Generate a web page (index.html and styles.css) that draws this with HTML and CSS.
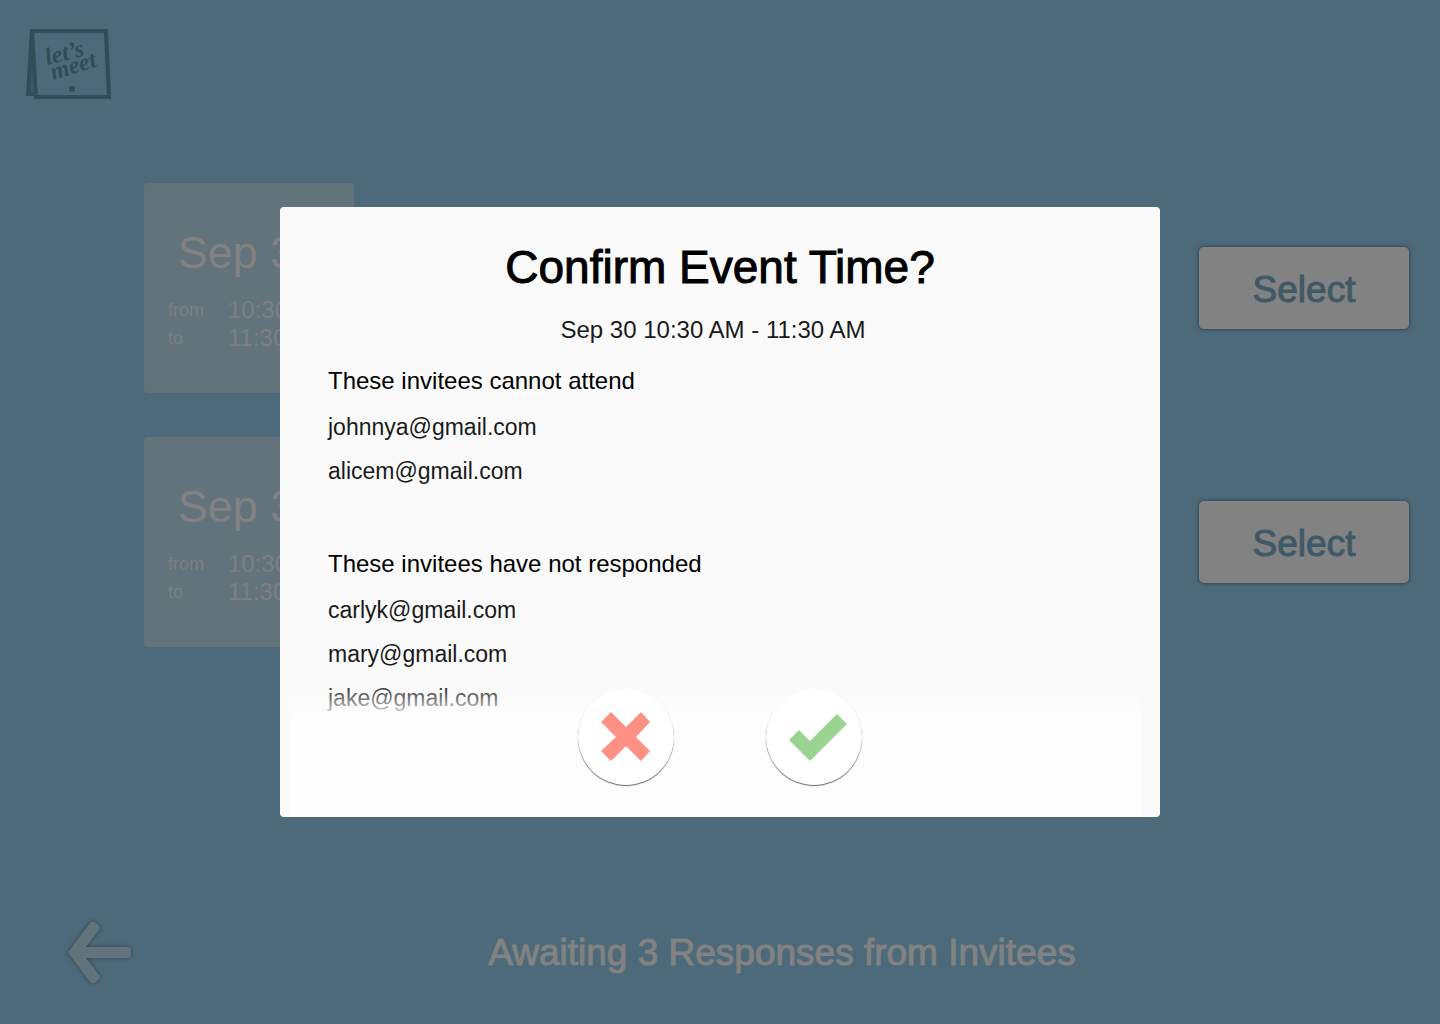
FILE: index.html
```html
<!DOCTYPE html>
<html lang="en">
<head>
<meta charset="utf-8">
<meta name="viewport" content="width=device-width, initial-scale=1">
<title>let's meet</title>
<link rel="stylesheet" href="styles.css">
</head>
<body>
<div class="page">
  <header class="header">
    <svg class="logo" width="88" height="72" viewBox="0 0 88 72" role="img" aria-label="let's meet">
      <path class="logo-back" d="M4 0H12L12 67H0Z"/>
      <path class="logo-frame" d="M6 2H80L83 68H10Z"/>
      <path class="logo-slot" d="M6 30L8 63H4Z"/>
      <g class="logo-text">
        <text transform="translate(21 36) rotate(-14)">let’s</text>
        <text transform="translate(27 51) rotate(-17)">meet</text>
      </g>
      <circle class="logo-dot" cx="46" cy="60" r="3"/>
    </svg>
  </header>
  <main class="slots">
    <section class="slot">
      <div class="card">
        <h2 class="card-date">Sep 30</h2>
        <dl class="times">
          <dt>from</dt><dd>10:30 AM</dd>
          <dt>to</dt><dd>11:30 AM</dd>
        </dl>
      </div>
      <button class="select" type="button">Select</button>
    </section>
    <section class="slot">
      <div class="card">
        <h2 class="card-date">Sep 30</h2>
        <dl class="times">
          <dt>from</dt><dd>10:30 AM</dd>
          <dt>to</dt><dd>11:30 AM</dd>
        </dl>
      </div>
      <button class="select" type="button">Select</button>
    </section>
  </main>
  <footer class="footer">
    <button class="back" type="button" aria-label="Back">
      <svg width="64" height="64" viewBox="0 0 64 64">
        <path d="M1 30L22 2Q25 -1 28 2L30 4Q33 6 31 9L18 26H59Q63 26 63 30V33Q63 37 59 37H18L31 54Q33 57 30 59L28 61Q25 64 22 61L1 33Q0 31 1 30Z"/>
      </svg>
    </button>
    <p class="status">Awaiting 3 Responses from Invitees</p>
  </footer>
</div>

<div class="overlay">
  <div class="dialog" role="dialog" aria-modal="true" aria-labelledby="dialog-title">
    <h1 class="dialog-title" id="dialog-title">Confirm Event Time?</h1>
    <p class="dialog-time">Sep 30 10:30 AM - 11:30 AM</p>
    <section class="group">
      <h2 class="group-title">These invitees cannot attend</h2>
      <ul class="people">
        <li>johnnya@gmail.com</li>
        <li>alicem@gmail.com</li>
      </ul>
    </section>
    <section class="group">
      <h2 class="group-title">These invitees have not responded</h2>
      <ul class="people">
        <li>carlyk@gmail.com</li>
        <li>mary@gmail.com</li>
        <li>jake@gmail.com</li>
      </ul>
    </section>
    <div class="actions">
      <button class="round" type="button" aria-label="Cancel">
        <svg width="96" height="96" viewBox="0 0 96 96"><path fill="#ff9184" d="M33 23L48 38L63 23L72 33L58 48L72 62L63 72L48 57L33 72L23 62L38 48L23 33Z"/></svg>
      </button>
      <button class="round" type="button" aria-label="Confirm">
        <svg width="96" height="96" viewBox="0 0 96 96"><path fill="#9bd490" d="M23 51L33 41L44 52L71 25L81 35L44 72Z"/></svg>
      </button>
    </div>
  </div>
</div>
</body>
</html>
```
FILE: styles.css
```css
* { box-sizing: border-box; }

body, h1, h2, p, ul, dl, dd { margin: 0; padding: 0; }

body {
  background: #4d6a7a;
  color: #828282;
  font-family: "Liberation Sans", Arial, sans-serif;
}

button {
  border: 0;
  padding: 0;
  font: inherit;
  cursor: pointer;
}

svg { display: block; }

.page {
  display: flex;
  flex-direction: column;
  min-height: 100vh;
}

.header { padding: 29px 26px 82px; }

.logo-back, .logo-dot { fill: #304d5a; }
.logo-slot { fill: #3b5866; }
.logo-frame {
  fill: #4d6a7a;
  stroke: #304d5a;
  stroke-width: 4;
}
.logo-text {
  fill: #304d5a;
  font: italic bold 24px "Liberation Serif", "Times New Roman", serif;
}

.slots {
  display: flex;
  flex-direction: column;
  gap: 44px;
  padding: 0 31px 0 144px;
}

.slot {
  display: flex;
  align-items: center;
  justify-content: space-between;
}

.card {
  width: 210px;
  height: 210px;
  padding: 44px 24px;
  border-radius: 4px;
  background: #62737c;
}

.card-date {
  font-size: 45px;
  font-weight: 400;
  line-height: 52px;
  text-align: center;
}

.times {
  display: grid;
  grid-template-columns: 60px 1fr;
  margin-top: 17px;
  line-height: 28px;
  white-space: nowrap;
  color: #7d7f80;
}
.times dt { font-size: 18px; }
.times dd { font-size: 24px; }

.select {
  width: 210px;
  height: 82px;
  padding-top: 4px;
  border-radius: 5px;
  background: #828282;
  box-shadow: 0 0 4px rgba(0, 0, 0, .5);
  color: #3f5967;
  font-size: 37px;
  -webkit-text-stroke: 1px;
}

.footer {
  display: flex;
  align-items: center;
  margin-top: auto;
  padding: 0 8px 39px 68px;
}

.back { background: none; }
.back svg {
  overflow: visible;
  fill: #62737c;
  filter: drop-shadow(0 0 2px rgba(0, 0, 0, .4));
}

.status {
  flex: 1;
  font-size: 37px;
  text-align: center;
  -webkit-text-stroke: 1px;
}

.overlay {
  position: fixed;
  inset: 0;
  display: grid;
  place-items: center;
}

.dialog {
  position: relative;
  width: 880px;
  max-width: 100%;
  min-height: 610px;
  padding: 32px 48px 104px;
  overflow: hidden;
  border-radius: 4px;
  background: #fafafa;
  color: #000;
  font-size: 24px;
}

.dialog-title {
  font-size: 46px;
  font-weight: 400;
  line-height: 56px;
  text-align: center;
  -webkit-text-stroke: 1px;
}

.dialog-time {
  margin-top: 20px;
  padding-right: 14px;
  line-height: 30px;
  color: #1a1a1a;
  text-align: center;
}

.group { margin-top: 22px; }
.group + .group { margin-top: 65px; }

.group-title {
  font-size: 24px;
  font-weight: 400;
  line-height: 28px;
}

.people {
  display: grid;
  gap: 16px;
  margin-top: 18px;
  color: #1a1a1a;
  font-size: 23px;
  line-height: 28px;
  list-style: none;
}

.actions {
  position: absolute;
  inset: auto 19px 0 9px;
  display: flex;
  justify-content: center;
  gap: 92px;
  height: 133px;
  padding: 5px 0 32px 10px;
  background: linear-gradient(rgba(253, 253, 253, 0), #fdfdfd 36px);
}

.round {
  width: 96px;
  height: 96px;
  border-radius: 50%;
  background: #fff;
  box-shadow: 0 1px 1px rgba(0, 0, 0, .6);
}
```
